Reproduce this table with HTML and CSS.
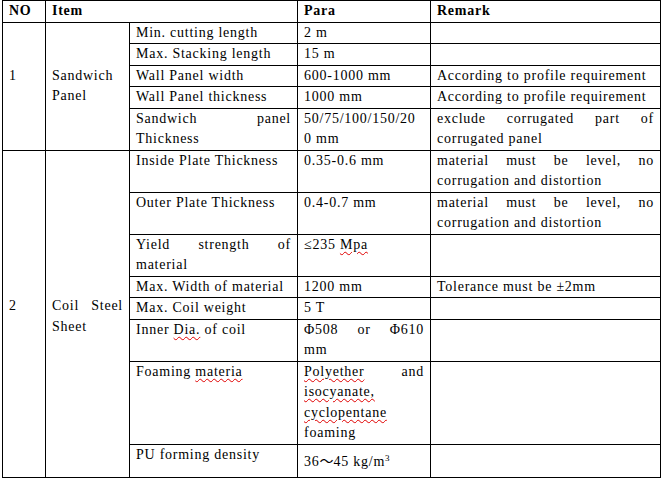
FILE: index.html
```html
<!DOCTYPE html>
<html lang="en">
<head>
<meta charset="utf-8">
<title>Sandwich panel line parameters</title>
<link rel="stylesheet" href="styles.css">
</head>
<body>
<table class="spec">
  <colgroup>
    <col class="c-no">
    <col class="c-item">
    <col class="c-sub">
    <col class="c-para">
    <col class="c-remark">
  </colgroup>
  <thead>
    <tr>
      <th>NO</th>
      <th colspan="2">Item</th>
      <th>Para</th>
      <th>Remark</th>
    </tr>
  </thead>
  <tbody>
    <tr>
      <td rowspan="5" class="mid">1<br>&nbsp;</td>
      <td rowspan="5" class="mid">Sandwich<br>Panel</td>
      <td>Min. cutting length</td>
      <td>2 m</td>
      <td></td>
    </tr>
    <tr>
      <td>Max. Stacking length</td>
      <td>15 m</td>
      <td></td>
    </tr>
    <tr>
      <td>Wall Panel width</td>
      <td>600-1000 mm</td>
      <td>According to profile requirement</td>
    </tr>
    <tr>
      <td>Wall Panel thickness</td>
      <td>1000 mm</td>
      <td>According to profile requirement</td>
    </tr>
    <tr>
      <td><span class="j">Sandwich panel</span>Thickness</td>
      <td>50/75/100/150/20<br>0 mm</td>
      <td><span class="j">exclude corrugated part of</span>corrugated panel</td>
    </tr>
    <tr>
      <td rowspan="8" class="mid low">2<br>&nbsp;</td>
      <td rowspan="8" class="mid low"><span class="j">Coil Steel</span>Sheet</td>
      <td>Inside Plate Thickness</td>
      <td>0.35-0.6 mm</td>
      <td><span class="j">material must be level, no</span>corrugation and distortion</td>
    </tr>
    <tr>
      <td>Outer Plate Thickness</td>
      <td>0.4-0.7 mm</td>
      <td><span class="j">material must be level, no</span>corrugation and distortion</td>
    </tr>
    <tr>
      <td><span class="j">Yield strength of</span>material</td>
      <td>≤235 <span class="sp">Mpa</span></td>
      <td></td>
    </tr>
    <tr>
      <td>Max. Width of material</td>
      <td>1200 mm</td>
      <td>Tolerance must be ±2mm</td>
    </tr>
    <tr>
      <td>Max. Coil weight</td>
      <td>5 T</td>
      <td></td>
    </tr>
    <tr>
      <td>Inner <span class="sp">Dia.</span> of coil</td>
      <td><span class="j">Φ508 or Φ610</span>mm</td>
      <td></td>
    </tr>
    <tr>
      <td>Foaming <span class="sp">materia</span></td>
      <td><span class="j"><span class="sp">Polyether</span> and</span><span class="sp">isocyanate,</span><br><span class="sp">cyclopentane</span><br>foaming</td>
      <td></td>
    </tr>
    <tr>
      <td>PU forming density</td>
      <td class="pad">36<span class="cjk">～</span>45 kg/m<sup>3</sup></td>
      <td></td>
    </tr>
  </tbody>
</table>
</body>
</html>
```
FILE: styles.css
```css
html, body {
  margin: 0;
  padding: 0;
  background: #fff;
}

body {
  font-family: "Liberation Serif", "Times New Roman", serif;
  font-size: 14px;
  color: #000;
}

.spec {
  border-collapse: collapse;
  table-layout: fixed;
  width: 658px;
  margin-left: 2px;
  letter-spacing: 0.75px;
  line-height: 20.5px;
}

.c-no { width: 43px; }
.c-item { width: 84px; }
.c-sub { width: 168px; }
.c-para { width: 133px; }
.c-remark { width: 230px; }

.spec th,
.spec td {
  border: 1px solid #000;
  padding: 0 6px;
  vertical-align: top;
  text-align: left;
}

.spec th {
  font-weight: bold;
}

.spec td.mid {
  vertical-align: middle;
}

.spec td.low {
  padding-top: 6px;
}

.spec td.pad {
  padding-top: 5px;
  padding-bottom: 5px;
}

.j {
  display: block;
  text-align: justify;
  text-align-last: justify;
}

.sp {
  text-decoration: underline wavy #e00000;
  text-decoration-thickness: 1px;
  text-underline-offset: 2px;
}

.cjk {
  font-family: "Noto Sans CJK SC", sans-serif;
  letter-spacing: 0;
}

sup {
  font-size: 9px;
  line-height: 0;
  vertical-align: 5px;
}
```
